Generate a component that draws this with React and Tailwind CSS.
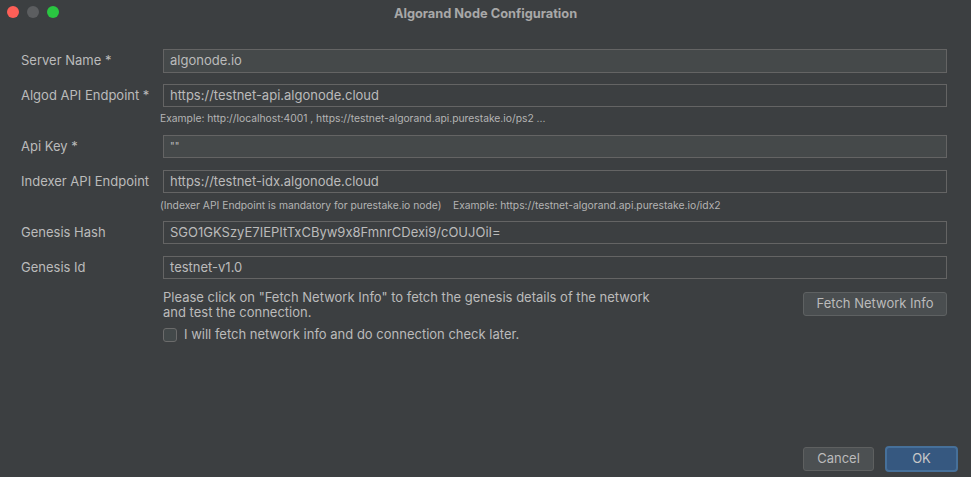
export default function App() {
  const font = { fontFamily: "Inter, 'Noto Sans', sans-serif" };

  const Label = ({ children }) => (
    <div className="w-[142px] shrink-0 text-[13px] text-[#bbbbbb]">{children}</div>
  );

  const Field = ({ value, light, h = "h-[23px]", small }) => (
    <div
      className={`flex-1 ${h} border border-[#646464] flex items-center pl-[6px] ${
        light ? "bg-[#45494a]" : "bg-[#3c3f41]"
      } ${small ? "text-[10px]" : "text-[13px]"} text-[#bbbbbb]`}
    >
      {value}
    </div>
  );

  return (
    <div
      className="w-[971px] h-[477px] bg-[#3c3f41] flex flex-col overflow-hidden [font-feature-settings:'calt'_0]"
      style={font}
    >
      {/* Title bar */}
      <div className="relative h-[27px] shrink-0 flex items-center justify-center">
        <div className="absolute left-[7px] top-[6px] flex gap-[8px]">
          <span className="w-[12px] h-[12px] rounded-full bg-[#fe5f57]" />
          <span className="w-[12px] h-[12px] rounded-full bg-[#5c5e60]" />
          <span className="w-[12px] h-[12px] rounded-full bg-[#2ac641]" />
        </div>
        <span className="text-[12.8px] font-bold text-[#a8a8a8]">Algorand Node Configuration</span>
      </div>

      {/* Form */}
      <div className="flex flex-col pl-[21px] pr-[24px] pt-[22px]">
        <div className="flex items-center">
          <Label>Server Name *</Label>
          <Field value="algonode.io" light h="h-[24px]" />
        </div>

        <div className="flex items-center mt-[11px]">
          <Label>Algod API Endpoint *</Label>
          <Field value="https://testnet-api.algonode.cloud" />
        </div>
        <div className="mt-[5px] ml-[139px] text-[10.3px] leading-[13px] text-[#b4b4b4]">
          Example: http://localhost:4001 , https://testnet-algorand.api.purestake.io/ps2 ...
        </div>

        <div className="flex items-center mt-[10px]">
          <Label>Api Key *</Label>
          <Field value={'""'} light small />
        </div>

        <div className="flex items-center mt-[12px]">
          <Label>Indexer API Endpoint</Label>
          <Field value="https://testnet-idx.algonode.cloud" />
        </div>
        <div className="mt-[6px] ml-[139px] text-[10.3px] leading-[13px] text-[#b4b4b4] whitespace-pre">
          {"(Indexer API Endpoint is mandatory for purestake.io node)    Example: https://testnet-algorand.api.purestake.io/idx2"}
        </div>

        <div className="flex items-center mt-[9px]">
          <Label>Genesis Hash</Label>
          <Field value="SGO1GKSzyE7IEPItTxCByw9x8FmnrCDexi9/cOUJOiI=" />
        </div>

        <div className="flex items-center mt-[12px]">
          <Label>Genesis Id</Label>
          <Field value="testnet-v1.0" />
        </div>

        <div className="flex items-start mt-[11px]">
          <div className="w-[142px] shrink-0" />
          <div className="flex-1 flex flex-col">
            <div className="flex items-start justify-between">
              <p className="text-[13px] leading-[15px] text-[#bbbbbb] w-[500px]">
                Please click on "Fetch Network Info" to fetch the genesis details of the network and test the connection.
              </p>
              <button className="mt-[2px] w-[144px] h-[24px] rounded-[3px] bg-[#4a4e50] border border-[#5e6162] text-[13px] text-[#bbbbbb]">
                Fetch Network Info
              </button>
            </div>
            <label className="flex items-center gap-[7px] mt-[7px] text-[13px] leading-[15px] text-[#bbbbbb]">
              <span className="w-[14px] h-[14px] rounded-[3px] border border-[#6b6b6b] bg-[#43494a]" />
              I will fetch network info and do connection check later.
            </label>
          </div>
        </div>
      </div>

      {/* Footer */}
      <div className="mt-auto flex justify-end items-center gap-[11px] pr-[13px] pb-[5px]">
        <button className="w-[71px] h-[24px] rounded-[3px] bg-[#4c5052] border border-[#5e6060] text-[13px] text-[#bbbbbb]">
          Cancel
        </button>
        <button className="w-[73px] h-[26px] rounded-[4px] bg-[#365880] border-2 border-[#46709a] text-[13px] text-[#c8c8c8]">
          OK
        </button>
      </div>
    </div>
  );
}
